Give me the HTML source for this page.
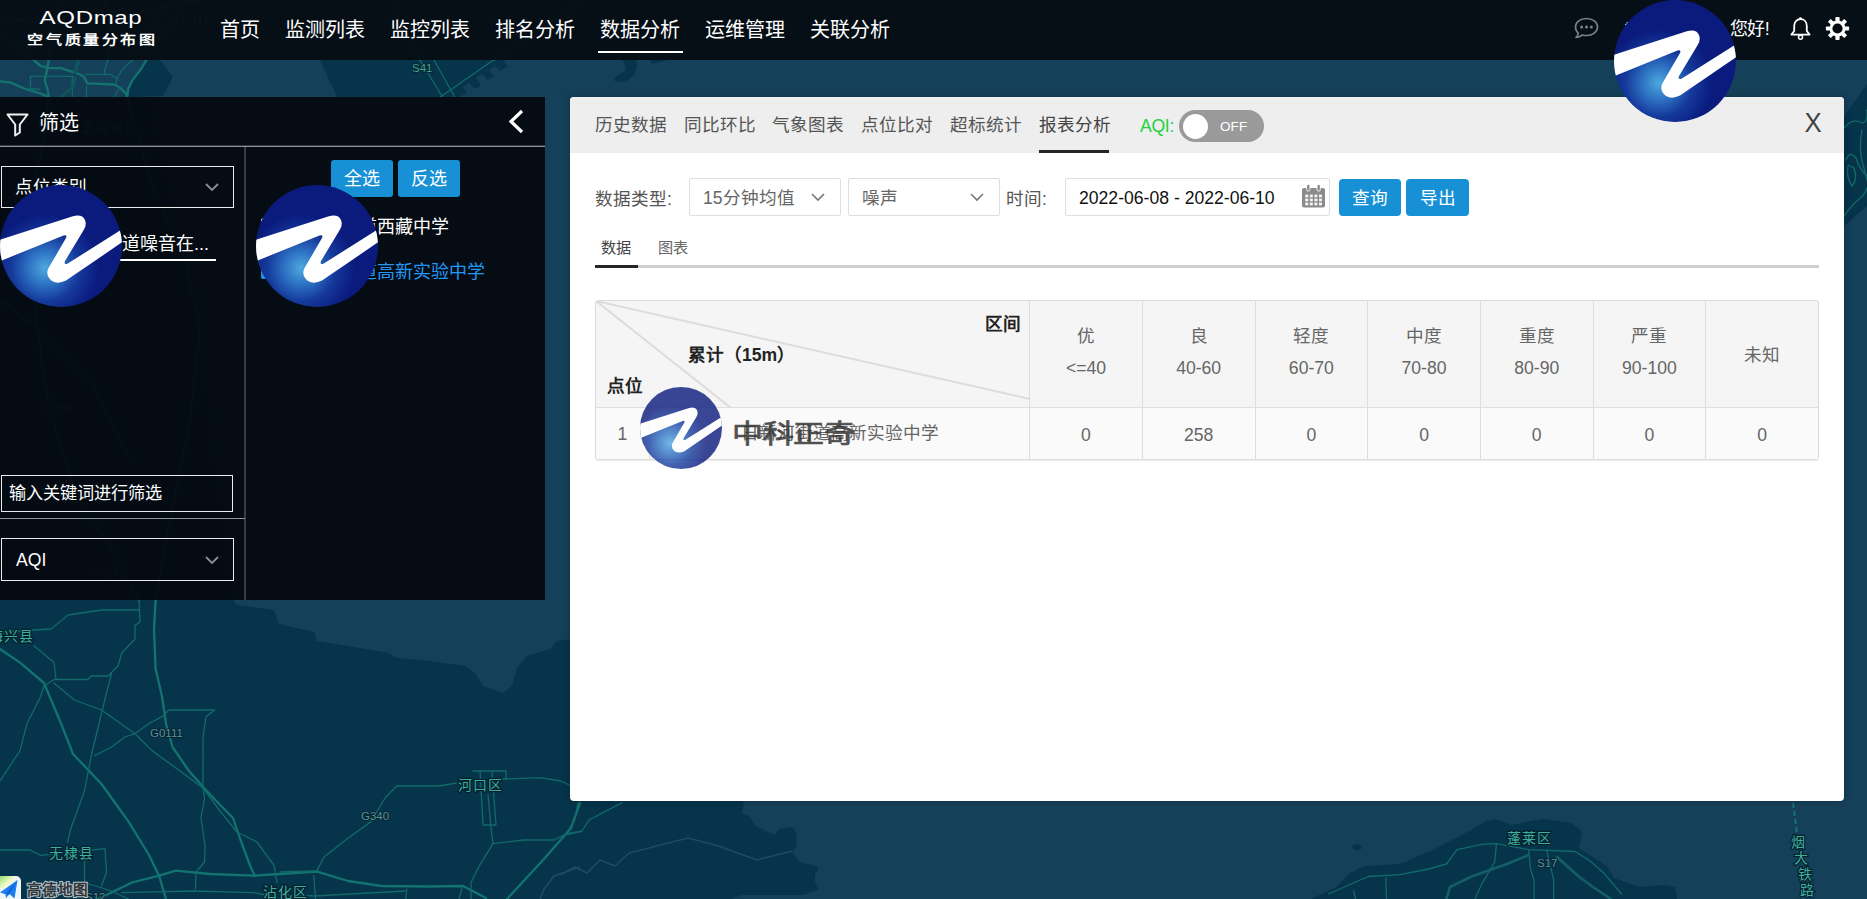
<!DOCTYPE html>
<html lang="zh-CN">
<head>
<meta charset="utf-8">
<title>AQDmap 空气质量分布图</title>
<style>
*{box-sizing:border-box;margin:0;padding:0}
html,body{width:1867px;height:899px;overflow:hidden}
body{position:relative;background:#15405a;font-family:"Liberation Sans",sans-serif;color:#fff}
.abs{position:absolute}
#map{position:absolute;left:0;top:0;width:1867px;height:899px}
/* header */
#hdr{position:absolute;left:0;top:0;width:1867px;height:60px;background:rgba(5,11,17,.93)}
#hdr .nav{position:absolute;top:16px;height:28px;line-height:28px;font-size:20px;color:#fff;white-space:nowrap}
#hdr .ul{position:absolute;left:598px;top:51px;width:85px;height:2px;background:#fff}
.brand1{position:absolute;left:38px;top:6px;width:106px;text-align:center;font-size:18.5px;line-height:24px;letter-spacing:.5px;color:#fff;transform:scaleX(1.3);transform-origin:50% 50%}
.brand2{position:absolute;left:21.5px;top:29px;width:142px;text-align:center;font-size:16px;line-height:22px;font-weight:bold;letter-spacing:2.65px;color:#fff;white-space:nowrap;transform:scaleY(.8);transform-origin:50% 50%}
/* left panel */
#lp{position:absolute;left:0;top:97px;width:545px;height:503px;background:rgba(4,9,16,.95)}
/* main panel */
#mp{position:absolute;left:570px;top:97px;width:1274px;height:704px;background:#fff;border-radius:4px;overflow:hidden;color:#666;box-shadow:0 0 9px rgba(0,10,20,.28)}
#mp .bar{position:absolute;left:0;top:0;width:1274px;height:56px;background:#eeeeee}
.tab{position:absolute;top:14px;height:28px;line-height:28px;font-size:17.6px;color:#555;white-space:nowrap}

/* main panel content (coords relative to #mp: x-570, y-97) */
.tab.act{color:#444}
.tabul{position:absolute;left:469px;top:53px;width:70px;height:3px;background:#262626}
.aqi{position:absolute;left:570px;top:14.5px;height:28px;line-height:28px;font-size:17.6px;color:#1fd13f;letter-spacing:-.3px}
.tog{position:absolute;left:609px;top:13px;width:85px;height:32px;border-radius:16px;background:#9a9a9a}
.tog i{position:absolute;left:3.5px;top:3.5px;width:25px;height:25px;border-radius:50%;background:#fff}
.tog b{position:absolute;left:41px;top:0;height:32px;line-height:33px;font-size:13.6px;font-weight:normal;color:#fff}
.cls{position:absolute;left:1233px;top:11px;width:20px;height:30px;line-height:30px;font-size:28px;color:#444;text-align:center;transform:scaleX(.92)}
.lbl{position:absolute;top:87px;height:30px;line-height:30px;font-size:17.6px;color:#555;white-space:nowrap}
.sel{position:absolute;top:81px;height:38px;border:1px solid #dedede;border-radius:2px;background:#fff;font-size:17.6px;line-height:38px;color:#666;padding-left:13px;white-space:nowrap}
.sel svg{position:absolute;top:11px;width:14px;height:14px}
.btn{position:absolute;top:82px;width:62px;height:37px;border-radius:4px;background:#1890d5;color:#fff;font-size:17.6px;line-height:38px;text-align:center}
.stab{position:absolute;top:139px;height:24px;line-height:24px;font-size:15.2px;color:#666}
.sline{position:absolute;left:25px;top:168px;width:1224px;height:3px;background:#cfcfcf}
.sact{position:absolute;left:25px;top:168px;width:43px;height:3px;background:#262626}

/* table: abs coords inside #mp => x-570,y-97 */
#tb{position:absolute;left:25px;top:203px;width:1224px;height:160px;border:1px solid #dcdcdc;border-radius:3px;background:#f5f5f5;box-shadow:0 1px 1px rgba(0,0,0,.08)}
#tb .row{position:absolute;left:0;top:106px;width:1222px;height:52px;background:#fafafa;border-top:1px solid #dfdfdf}
#tb .v{position:absolute;top:0;width:1px;height:158px;background:#dddddd}
#tb .h1{position:absolute;width:112.7px;text-align:center;font-size:17.6px;line-height:24px;color:#666;white-space:nowrap}
#tb .bd{position:absolute;font-size:17.6px;line-height:24px;font-weight:bold;color:#222;white-space:nowrap}
#tb svg.dg{position:absolute;left:0;top:0;width:434px;height:107px}
.cal{position:absolute;left:731px;top:87px;width:25px;height:24px}

/* left panel content: coords relative to #lp (y-97) */
#lp .hl{position:absolute;left:0;top:49px;width:545px;height:1px;background:#8e9396;box-shadow:0 -1px 0 rgba(142,147,150,.35)}
#lp .vl{position:absolute;left:244px;top:50px;width:2px;height:453px;background:#383d41}
#lp .hl2{position:absolute;left:0;top:421px;width:245px;height:1px;background:#8d9296}
#lp .ttl{position:absolute;left:39px;top:11px;height:30px;line-height:30px;font-size:20px;color:#fff}
#lp .box{position:absolute;left:1px;width:233px;border:1px solid #ececec;font-size:17.6px;color:#fff;white-space:nowrap;overflow:hidden}
#lp .bb{position:absolute;top:63px;width:62px;height:37px;border-radius:3px;background:#1890d5;color:#fff;font-size:18px;line-height:39px;text-align:center}
#lp .it{position:absolute;height:26px;line-height:26px;font-size:18px;white-space:nowrap}
.logo{position:absolute;width:122px;height:122px}
</style>
</head>
<body>
<svg width="0" height="0" style="position:absolute"><defs>
<radialGradient id="zg" cx="45" cy="83" r="54" gradientUnits="userSpaceOnUse"><stop offset="0" stop-color="#4ea8df"/><stop offset=".3" stop-color="#2f74c4"/><stop offset=".62" stop-color="#153a9c"/><stop offset="1" stop-color="#0a1a7d"/></radialGradient>
<clipPath id="zc"><circle cx="61" cy="61" r="61"/></clipPath>
<symbol id="zq" viewBox="0 0 122 122"><circle cx="61" cy="61" r="61" fill="url(#zg)"/>
<path clip-path="url(#zc)" fill="#fff" d="M-2 55.5 L72 31.6 Q82 28.5 85 35 Q87 40 83.7 45 L65 76 Q63.5 79.5 67 79 L124 43 L124 56 L66 95.5 Q58 99.5 52 96 Q45.5 91 48 84 L66 53 Q67.5 49.5 63.5 50.5 L-2 77 Z"/></symbol>
</defs></svg>
<svg id="map" viewBox="0 0 1867 899">
<rect width="1867" height="899" fill="#15405a"/>
<g fill="#06344b">
<path d="M0 100 L150 100 L200 330 L215 470 L228 560 L233 600 L237 605 L274 610 L279 624 L300 629 L314 632 L317 641 L348 646 L365 649 L388 652.5 L395 657.6 L429 661 L466 666 L476 674.5 L483 686 L503 693 L512 686 L517 668 L527 656 L550 649 L557 641 L570 639 L610 700 L680 770 L744 802 L742 813 L749 816 L757 827 L775 835 L779 829 L793 827 L797 835 L796 847 L793 853 L800 862 L819 867 L815 875 L815 882 L819 889 L804 895 L742 895 L731 899 L0 899 Z"/>
<path d="M147 60 L160 60 L173 77 L163 96 L128 97 L133 80 Z"/>
<path d="M320 60 L504 60 L507 67 L500 71 L495 66 L489 70 L494 76 L488 80 L482 74 L476 78 L481 85 L475 89 L469 83 L463 87 L467 93 L459 97 L337 97 Z"/>
<path d="M622 60 L636 60 Q640 72 628 80 Q618 84 614 80 Q618 74 624 72 Q628 68 622 60 Z"/>
<path d="M650 60 L668 60 L652 64 Z"/>
<path d="M1840 122 L1867 84 L1867 206 L1840 230 Z"/>
<path d="M1311 899 L1336 887 L1350 873 L1364 866 L1400 864 L1429 851.5 L1450 841 L1471 830 L1486 821 L1496 819 L1511 825 L1543 819 L1572 823 L1582 832 L1579 848 L1593 857 L1607 866 L1614 878 L1639 887 L1664 885 L1675 887 L1677 899 Z"/>
<ellipse cx="1357" cy="847" rx="5" ry="3"/>
</g>
<g fill="none" stroke="#1c4c62" stroke-width="1.6" stroke-linejoin="round">
<path d="M560 875 L575 867 L587 873 L600 860 L615 866 L629 853 L688 838 L717 845.5 L757 860 L764 858 L793 851"/>
<path d="M580 867 L554 876 L544 889 L540 899"/>
</g>
<g fill="none" stroke="#13746f" stroke-width="2.3" stroke-linejoin="round" stroke-linecap="round">
<path d="M48.8 97 L44 140 L30 200 L32 280 L44 380 L58 440 L80 500 L118 560 L139 600"/><path d="M127 97 L150 180 L185 260 L200 330 L190 420 L170 520 L155.6 600"/><path d="M0 300 L40 330 L90 380 L130 460"/>
<path d="M155.6 600 L154 629 L155.6 669 L162 696.5 L166 723.5 L172.5 747 L189 771 L210 794.5 L233 818 L240 838.5 L250 865.5 L255 876"/>
<path d="M0 649 L20 662.6 L44 683 L61 723.5 L73 754 L101.5 784 L128.5 821.6 L149 855 L159 875.7 L166 899"/>
<path d="M98 899 L132 882.5 L159 875.7 L176 870.6 L210 874 L254 875.7 L280 874 L317 871.6 L348 881 L381.5 886 L429 886.5 L463 886 L486 898"/>
<path d="M580 803 L571 828 L544 859 L507 899"/>
<path d="M33.6 60 L22 48 L8 40 L0 37"/><path d="M48.8 60 L52 34 L60 12 L62 0"/><path d="M146.5 60 L160 38 L178 14 L186 0"/><path d="M132.3 60 L150 30 L170 0"/><path d="M107.9 60 L111 30 L104 0"/><path d="M0 18 L40 22 L90 10 L130 14 L200 0"/><path d="M420 60 L400 20 L392 0"/><path d="M493.4 60 L540 28 L585 0"/>
<path d="M33.6 60 L40.7 66 L49 68.2 L61 68.2 L77 73.3 L83.5 76.3 L87.5 83.4 L114 84.5 L120 87.5 L126 93.6 L127 97"/>
<path d="M48.8 60 L46.8 70 L44.8 80.4 L47.8 90.6 L48.8 97"/>
<path d="M0 81.4 L10 82.4 L24.4 88.5 L40.7 93.6 L48.8 97"/>
<path d="M146.5 60 L140.4 70 L132.3 80.4 L128.2 88.5 L127.2 97"/>
</g>
<g fill="none" stroke="#126a69" stroke-width="1.3" stroke-linejoin="round" stroke-linecap="round">
<path d="M0 632 L51 629 L68 615 L101.5 610 L139 610"/>
<path d="M139 600 L140 622 L135 625.4 L135 639 L122 652.5 L118 666 L108 676 L91 676 L88 679.5 L54 679.5 L44 686"/>
<path d="M34 645.7 L54 662.6 L56 679.5"/>
<path d="M111.6 673 L101.5 713 L91 757 L84.5 791 L71 828 L67.6 842"/>
<path d="M44 686 L40.6 696.5 L27 723.5 L20 750.6 L0 781"/>
<path d="M54 683 L74.4 700 L101.5 710 L135 733.7 L152 750.6 L189 777.6 L203 788 L220 811 L237 832 L257 842 L274 865.5 L277 882.5"/>
<path d="M94.7 755.6 L111.6 747 L125 737 L135 733.7 L149 723.5 L162 716.7 L169 710 L214.7 710 L206 716.7 L203 737 L203 788 L204.6 798 L201 818 L205 845 L204.6 862 L196 872 L195.5 889"/>
<path d="M0 850 L30 850 L40.6 855.4 L105 848.6 L106.5 872 L101.5 886"/>
<path d="M84.5 855.4 L84.5 882.5 L111.6 891 L128.5 899"/>
<path d="M121.7 892.6 L193 891 L254 892.6 L270.5 896"/>
<path d="M280 872 L317 870.6 L324 857 L347.6 838.5 L371 821.6 L385 798 L396.7 786 L439 786 L459 782.7 L473 779.3"/>
<path d="M472.8 771 L506 771 L506 779"/>
<path d="M480 771 L483 825 L496 825 L492 771"/>
<path d="M496 779.3 L540 777.6 L561 781 L571 786"/>
<path d="M488 794.5 L491.4 831.7 L493 843.6 L479.5 865.5 L471 882.5 L471 899"/>
<path d="M493 843.6 L523.5 840 L554 840 L567.5 833.4 L580 831.7"/>
<path d="M313.8 875.7 L315.5 899"/>
<path d="M406.8 889 L405.8 899"/>
<path d="M462.6 886 L459 899"/>
<path d="M280 894 L314 896 L405 891"/>
<path d="M578 802.6 L574.6 820 L563.6 838 L560 840"/>
<path d="M622 802.6 L589 820 L582 831 L567 834.6"/>
<path d="M132.3 60 L122 70 L117 78.4 L116 84.5"/>
<path d="M107.9 60 L104.8 70 L104.8 74.3"/>
<path d="M30.5 76.3 L73.3 76.3"/>
<path d="M30.5 76.3 L30.5 88.5 L39.7 89.5"/>
<path d="M85.5 74.3 L110 74.3 L117 78.4"/>
<path d="M72.3 76.3 L72.3 97"/>
<path d="M86.5 86.5 L86.5 97"/>
<path d="M120 87.5 L114 97"/>
<path d="M420 60 L442.5 97"/>
<path d="M434 60 L454.7 97"/>
<path d="M493.4 60 L440.4 97"/>
<path d="M1328.6 894 L1368 876.5 L1400 874.7 L1428.7 869 L1446.5 864 L1457 849.7 L1482 844.3 L1496.5 843.6 L1528.7 849.7 L1575 851.5 L1589.4 860.4 L1603.7 873 L1621.6 894"/>
<path d="M1496.5 843.6 L1494.7 862 L1482 883.6 L1475 899"/>
<path d="M1528.7 849.7 L1530.5 869 L1534 880 L1534 899"/>
<path d="M1546.5 849.7 L1553.7 880 L1553.7 899"/>
<path d="M1385.8 878 L1386.5 899"/>
<path d="M1353.6 890.7 L1355.4 899"/>
<path d="M1844 128 Q1852 118 1860 122 T1867 110"/>
<path d="M1846 160 Q1850 150 1856 158 Q1860 170 1867 176"/>
<path d="M1862 130 Q1858 150 1864 168 L1867 180"/>
<path d="M1844 216 Q1852 205 1858 200 Q1864 196 1867 188"/>
<path d="M1848 165 Q1846 178 1852 186 Q1858 180 1854 168 Z"/>
</g>
<g fill="none" stroke="#145f66" stroke-width="2.6" stroke-linecap="round">
<path d="M1528.7 855 L1507 864 L1471.5 876.5 L1450 887 L1446.5 899"/>
<path d="M1557 857 L1578.7 876.5 L1593 887 L1611 899"/>
<path d="M78 62 L75 72" stroke="#0e565c" stroke-width="4"/>
<path d="M75.3 78.4 L73.3 86.5 L61 97" stroke="#0e565c" stroke-width="3"/>
</g>
<path d="M1793 803 L1795 818 L1797 834" fill="none" stroke="#17756f" stroke-width="2" stroke-dasharray="5 3"/>
<g font-family="'Liberation Sans',sans-serif" font-size="14" fill="#3fae9d" stroke="#04202d" stroke-width="2.4" paint-order="stroke" letter-spacing="1">
<text x="-11" y="641">海兴县</text>
<text x="49" y="858">无棣县</text>
<text x="458" y="790">河口区</text>
<text x="263" y="897">沾化区</text>
<text x="1507" y="843">蓬莱区</text><text x="80" y="133">滨海新区</text>
<text x="1791" y="847">烟</text>
<text x="1794" y="863">大</text>
<text x="1798" y="879">铁</text>
<text x="1800" y="895">路</text>
</g>
<g font-family="'Liberation Sans',sans-serif" font-size="11.5" fill="#5e9298" stroke="#04202d" stroke-width="1.6" paint-order="stroke">
<text x="150" y="737">G0111</text>
<text x="361" y="820">G340</text>
<text x="1537" y="867">S17</text>
<text x="85" y="901">S12</text>
<text x="412" y="72" fill="#46a596">S41</text><text x="43" y="412">G228</text><text x="176" y="23">G0111</text><text x="92" y="578">G0111</text>
</g>
</svg>

<div class="abs" style="left:0;top:876px;width:21px;height:23px;background:#eef6f8;border-top-right-radius:5px;overflow:hidden"><svg width="21" height="23" viewBox="0 0 21 23"><defs><linearGradient id="ag" x1="0" y1="0" x2="1" y2="1"><stop offset="0" stop-color="#8fe06a"/><stop offset=".5" stop-color="#e9f7c4"/><stop offset="1" stop-color="#ffffff"/></linearGradient></defs><rect width="14" height="12" fill="url(#ag)"/><path d="M0 16.5 L17.5 4 L14.5 22.5 L9.5 18 L6 22 L5.5 18.2 Z" fill="#1a7df2"/><path d="M5.5 18.2 L17.5 4 L9.5 18 Z" fill="#1263cf"/></svg></div>
<svg class="abs" style="left:24px;top:878px;width:70px;height:21px" viewBox="0 0 70 21"><text x="2.5" y="16.8" font-family="'Liberation Sans',sans-serif" font-size="14.6" font-weight="bold" fill="#30363a" stroke="#bccacf" stroke-width="1.9" paint-order="stroke" letter-spacing=".5">高德地图</text></svg>
<div id="hdr">
  <div class="brand1">AQDmap</div>
  <div class="brand2">空气质量分布图</div>
  <div class="nav" style="left:220px">首页</div>
  <div class="nav" style="left:285px">监测列表</div>
  <div class="nav" style="left:390px">监控列表</div>
  <div class="nav" style="left:495px">排名分析</div>
  <div class="nav" style="left:600px">数据分析</div>
  <div class="nav" style="left:705px">运维管理</div>
  <div class="nav" style="left:810px">关联分析</div>
  <div class="ul"></div>
  <svg style="position:absolute;left:1574px;top:17px;width:25px;height:22px" viewBox="0 0 25 22"><path d="M12.5 1.5 C18.6 1.5 23.5 5.3 23.5 10 C23.5 14.7 18.6 18.5 12.5 18.5 C11 18.5 9.6 18.3 8.3 17.9 C6.8 19.4 4.6 20.3 2 20.4 C3.4 19.2 4.2 17.7 4.3 16.2 C2.5 14.6 1.5 12.4 1.5 10 C1.5 5.3 6.4 1.5 12.5 1.5 Z" fill="none" stroke="#7d8387" stroke-width="1.6" stroke-linejoin="round"/><circle cx="7.6" cy="10" r="1.5" fill="#7d8387"/><circle cx="12.5" cy="10" r="1.5" fill="#7d8387"/><circle cx="17.4" cy="10" r="1.5" fill="#7d8387"/></svg>
  <div class="abs" style="left:1625px;top:15px;height:26px;line-height:26px;font-size:18px;color:#fff;white-space:nowrap">testuser,</div>
  <div class="abs" style="left:1730px;top:16px;height:26px;line-height:26px;font-size:18px;color:#fff;white-space:nowrap;letter-spacing:-.6px">您好!</div>
  <svg style="position:absolute;left:1789px;top:16px;width:23px;height:25px" viewBox="0 0 23 25"><path d="M11.5 3.2 C7.4 3.2 5.2 6.3 5.2 10 V15 L2.4 18.6 H20.6 L17.8 15 V10 C17.8 6.3 15.6 3.2 11.5 3.2 Z" fill="none" stroke="#fff" stroke-width="1.8" stroke-linejoin="round"/><circle cx="11.5" cy="2.6" r="1.4" fill="#fff"/><circle cx="11.5" cy="21.3" r="2" fill="none" stroke="#fff" stroke-width="1.5"/></svg>
  <svg style="position:absolute;left:1825px;top:16px;width:25px;height:25px" viewBox="-12.5 -12.5 25 25"><g fill="#fff"><circle r="8"/><g id="gt"><rect x="-2.1" y="-11.6" width="4.2" height="23.2" rx=".8"/></g><use href="#gt" transform="rotate(45)"/><use href="#gt" transform="rotate(90)"/><use href="#gt" transform="rotate(135)"/></g><circle r="5.1" fill="#050b12"/></svg>
</div>

<div id="lp">
  <svg style="position:absolute;left:6px;top:16px;width:23px;height:24px" viewBox="0 0 23 24"><path d="M1.5 1.5 H21.5 L13.8 11.5 V19.5 L9.2 22.5 V11.5 Z" fill="none" stroke="#f2f2f2" stroke-width="2" stroke-linejoin="round"/></svg>
  <div class="ttl">筛选</div>
  <svg style="position:absolute;left:506px;top:11px;width:20px;height:28px" viewBox="0 0 20 28"><path d="M16 3 L5 13.5 L16 24" fill="none" stroke="#fff" stroke-width="3.2"/></svg>
  <div class="hl"></div><div class="vl"></div><div class="hl2"></div>
  <div class="box" style="top:69px;height:42px;line-height:40px;padding-left:13px">点位类别<svg style="position:absolute;left:203px;top:13px;width:14px;height:14px" viewBox="0 0 14 14"><path d="M1 4 L7 10 L13 4" fill="none" stroke="#8b9094" stroke-width="1.8"/></svg></div>
  <div class="it" style="left:104px;top:134px;color:#fff">街道噪音在...</div>
  <div class="abs" style="left:68px;top:162px;width:148px;height:2px;background:#fff"></div>
  <div class="bb" style="left:331px">全选</div>
  <div class="bb" style="left:398px">反选</div>
  <div class="abs" style="left:261px;top:121px;width:16px;height:16px;border:1px solid #d8d8d8;border-radius:2px;background:#fff"></div>
  <div class="it" style="left:287px;top:117px;color:#fff">日新河街道西藏中学</div>
  <div class="abs" style="left:261px;top:166px;width:16px;height:16px;border-radius:2px;background:#1e90e6"></div>
  <div class="it" style="left:287px;top:162px;color:#2397f5">日新河街道高新实验中学</div>
  <div class="box" style="top:378px;height:37px;line-height:35px;padding-left:7px;width:232px;font-size:17.2px">输入关键词进行筛选</div>
  <div class="box" style="top:441px;height:43px;line-height:42px;padding-left:14px">AQI<svg style="position:absolute;left:203px;top:14px;width:14px;height:14px" viewBox="0 0 14 14"><path d="M1 4 L7 10 L13 4" fill="none" stroke="#8b9094" stroke-width="1.8"/></svg></div>
</div>
<svg class="logo" style="left:0;top:185px"><use href="#zq"/></svg>
<svg class="logo" style="left:256px;top:185px"><use href="#zq"/></svg>

<div id="mp">
  <div class="bar"></div>
  <div class="tab" style="left:25px">历史数据</div>
  <div class="tab" style="left:113.7px">同比环比</div>
  <div class="tab" style="left:202.4px">气象图表</div>
  <div class="tab" style="left:291.1px">点位比对</div>
  <div class="tab" style="left:379.8px">超标统计</div>
  <div class="tab act" style="left:468.5px">报表分析</div>
  <div class="tabul"></div>
  <div class="aqi">AQI:</div>
  <div class="tog"><i></i><b>OFF</b></div>
  <div class="cls">X</div>

  <div class="lbl" style="left:25px">数据类型:</div>
  <div class="sel" style="left:119px;width:152px">15分钟均值<svg style="left:121px" viewBox="0 0 14 14"><path d="M1 4 L7 10 L13 4" fill="none" stroke="#777" stroke-width="1.6"/></svg></div>
  <div class="sel" style="left:278px;width:152px">噪声<svg style="left:121px" viewBox="0 0 14 14"><path d="M1 4 L7 10 L13 4" fill="none" stroke="#777" stroke-width="1.6"/></svg></div>
  <div class="lbl" style="left:436px">时间:</div>
  <div class="sel" style="left:495px;width:265px;color:#111">2022-06-08 - 2022-06-10</div>
  <div class="btn" style="left:769px">查询</div>
  <div class="btn" style="left:836px;width:63px">导出</div>

<svg class="cal" viewBox="0 0 25 24"><rect x="1" y="4" width="23" height="19.5" rx="2" fill="#8b8b8b"/><rect x="5.6" y="0.5" width="3.4" height="6.5" rx="1.4" fill="#8b8b8b" stroke="#fff" stroke-width=".9"/><rect x="16" y="0.5" width="3.4" height="6.5" rx="1.4" fill="#8b8b8b" stroke="#fff" stroke-width=".9"/><g fill="#f4f4f4"><rect x="4.2" y="10.6" width="3" height="2.7"/><rect x="8.8" y="10.6" width="3" height="2.7"/><rect x="13.4" y="10.6" width="3" height="2.7"/><rect x="18" y="10.6" width="3" height="2.7"/><rect x="4.2" y="14.6" width="3" height="2.7"/><rect x="8.8" y="14.6" width="3" height="2.7"/><rect x="13.4" y="14.6" width="3" height="2.7"/><rect x="18" y="14.6" width="3" height="2.7"/><rect x="4.2" y="18.6" width="3" height="2.7"/><rect x="8.8" y="18.6" width="3" height="2.7"/><rect x="13.4" y="18.6" width="3" height="2.7"/><rect x="18" y="18.6" width="3" height="2.7"/></g></svg>
<div id="tb">
<div class="row"></div>
<svg class="dg" viewBox="0 0 434 107"><path d="M0 0 L434 98 M0 0 L135 107" stroke="#dcdcdc" stroke-width="2" fill="none"/></svg>
<div class="v" style="left:53px;top:107px;height:51px"></div>
<div class="v" style="left:433.1px"></div>
<div class="v" style="left:545.8px"></div>
<div class="v" style="left:658.5px"></div>
<div class="v" style="left:771.2px"></div>
<div class="v" style="left:883.9px"></div>
<div class="v" style="left:996.6px"></div>
<div class="v" style="left:1109.3px"></div>
<div class="h1" style="left:433.6px;top:23px">优</div>
<div class="h1" style="left:433.6px;top:55px">&lt;=40</div>
<div class="h1" style="left:433.6px;top:122px">0</div>
<div class="h1" style="left:546.3px;top:23px">良</div>
<div class="h1" style="left:546.3px;top:55px">40-60</div>
<div class="h1" style="left:546.3px;top:122px">258</div>
<div class="h1" style="left:659.0px;top:23px">轻度</div>
<div class="h1" style="left:659.0px;top:55px">60-70</div>
<div class="h1" style="left:659.0px;top:122px">0</div>
<div class="h1" style="left:771.7px;top:23px">中度</div>
<div class="h1" style="left:771.7px;top:55px">70-80</div>
<div class="h1" style="left:771.7px;top:122px">0</div>
<div class="h1" style="left:884.4px;top:23px">重度</div>
<div class="h1" style="left:884.4px;top:55px">80-90</div>
<div class="h1" style="left:884.4px;top:122px">0</div>
<div class="h1" style="left:997.1px;top:23px">严重</div>
<div class="h1" style="left:997.1px;top:55px">90-100</div>
<div class="h1" style="left:997.1px;top:122px">0</div>
<div class="h1" style="left:1109.8px;top:42px">未知</div>
<div class="h1" style="left:1109.8px;top:122px">0</div>
<div class="bd" style="left:389px;top:11px">区间</div>
<div class="bd" style="left:92px;top:42px">累计（15m）</div>
<div class="bd" style="left:11px;top:73px">点位</div>
<div class="h1" style="left:0;width:53px;top:121px">1</div>
<div class="h1" style="left:54px;width:380px;top:120px">日新河街道高新实验中学</div>
</div>
  <div class="stab" style="left:31px;color:#444">数据</div>
  <div class="stab" style="left:88px">图表</div>
  <div class="sline"></div><div class="sact"></div>
</div>
<svg class="logo" style="left:1614px;top:0"><use href="#zq"/></svg>
<svg class="abs" style="left:640px;top:387px;width:82px;height:82px;opacity:.8"><use href="#zq"/></svg>
<div class="abs" style="left:732px;top:415px;width:124px;height:38px;line-height:38px;font-size:31px;font-weight:normal;color:#333;-webkit-text-stroke:.8px #333;opacity:.85;white-space:nowrap;letter-spacing:-.5px;transform:scaleY(.86);transform-origin:50% 50%">中科正奇</div>
</body>
</html>
